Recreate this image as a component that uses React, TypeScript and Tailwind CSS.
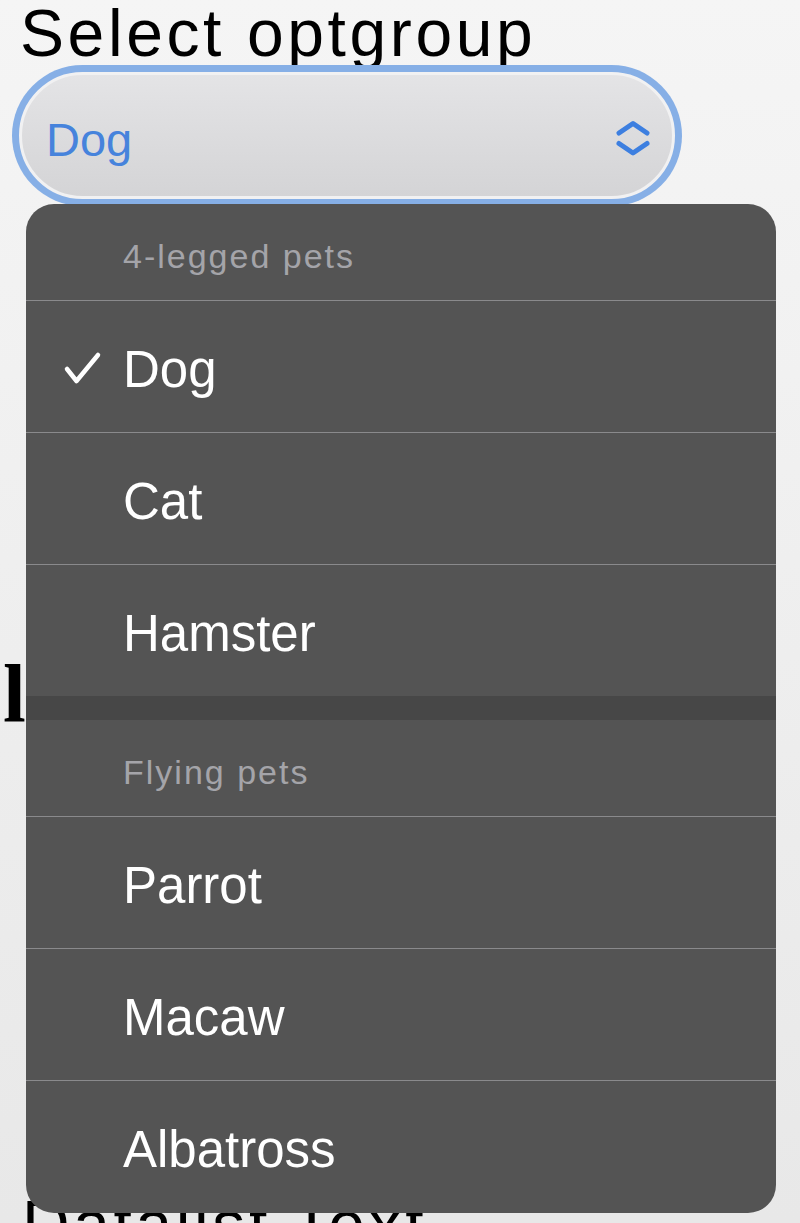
import React from "react";

const sans = { fontFamily: '"Liberation Sans", Arial, sans-serif' };

function Check() {
  return (
    <svg width="40" height="36" viewBox="0 0 40 36" className="absolute left-[37px] top-[calc(50%+2px)] -translate-y-1/2">
      <path d="M4 18 L13.5 30 L35 4" fill="none" stroke="#ffffff" strokeWidth="4.5" strokeLinecap="round" strokeLinejoin="round" />
    </svg>
  );
}

function Header({ label }: { label: string }) {
  return (
    <div className="flex h-[96px] items-center pl-[97px] pt-[8px] text-[34px] leading-none tracking-[2px] text-[#a4a4a9]">
      {label}
    </div>
  );
}

function Item({ label, checked }: { label: string; checked?: boolean }) {
  return (
    <div className="relative flex h-[131px] items-center pl-[97px] pt-[5px] text-[51px] leading-none text-white">
      {checked && <Check />}
      {label}
    </div>
  );
}

function Sep() {
  return <div className="h-px bg-[#8a8a8c]" />;
}

export default function App() {
  return (
    <div
      className="relative h-[1223px] w-[800px] overflow-hidden bg-gradient-to-b from-[#f5f5f5] to-[#e8e8e8]"
      style={sans}
    >
      <div className="flex flex-col px-5">
        <div className="h-[66px] text-[66px] leading-[66px] tracking-[3.6px] text-black">Select optgroup</div>

        <div className="ml-[-8px] mt-[-1px] h-[141px] w-[670px] rounded-full bg-[#86afe6] p-[7px]">
          <div className="flex h-full w-full items-center justify-between rounded-full border-[3px] border-[#f1f1f2] bg-gradient-to-b from-[#e4e4e6] to-[#d4d4d6] pl-[24px] pr-[22px] pt-[8px]">
            <span className="text-[47px] leading-none text-[#4683dc]">Dog</span>
            <svg width="34" height="40" viewBox="0 0 34 40">
              <path d="M3 13 L17 3.5 L31 13" fill="none" stroke="#3d7fe0" strokeWidth="5" strokeLinecap="round" strokeLinejoin="round" />
              <path d="M3 23.5 L17 33 L31 23.5" fill="none" stroke="#3d7fe0" strokeWidth="5" strokeLinecap="round" strokeLinejoin="round" />
            </svg>
          </div>
        </div>

        <div
          className="ml-[-17px] mt-[447px] h-[82px] text-[82px] font-bold leading-[82px] text-black"
          style={{ fontFamily: '"Liberation Serif", "Times New Roman", serif' }}
        >
          label
        </div>

        <div className="ml-[2px] mt-[456px] h-[66px] text-[66px] leading-[66px] tracking-[3.6px] text-black">Datalist Text</div>
      </div>

      <div className="absolute left-[26px] top-[204px] flex h-[1009px] w-[750px] flex-col overflow-hidden rounded-[28px] bg-[#545454]">
        <Header label="4-legged pets" />
        <Sep />
        <Item label="Dog" checked />
        <Sep />
        <Item label="Cat" />
        <Sep />
        <Item label="Hamster" />
        <div className="h-[24px] bg-[#474747]" />
        <Header label="Flying pets" />
        <Sep />
        <Item label="Parrot" />
        <Sep />
        <Item label="Macaw" />
        <Sep />
        <Item label="Albatross" />
      </div>
    </div>
  );
}
